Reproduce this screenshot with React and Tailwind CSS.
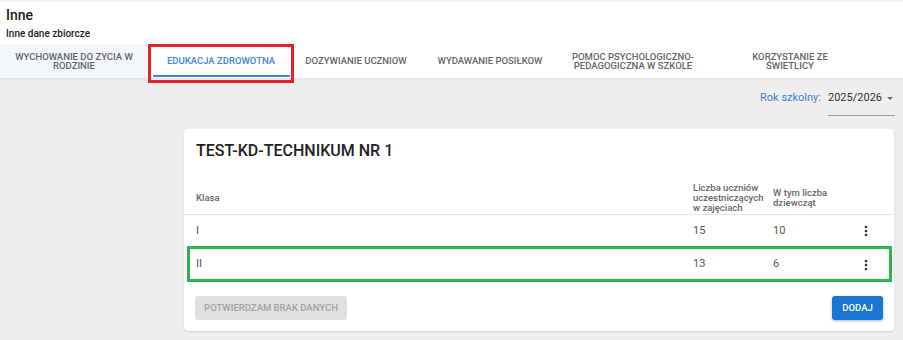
import React from 'react';

const tabs = [
    { label: <>WYCHOWANIE DO ZYCIA W<br />RODZINIE</>, w: 'w-[148px]', bg: 'bg-[#f4f7fa]' },
    { label: 'EDUKACJA ZDROWOTNA', w: 'w-[146px]', active: true },
    { label: 'DOZYWIANIE UCZNIOW', w: 'w-[124px]' },
    { label: 'WYDAWANIE POSIŁKOW', w: 'w-[144px]' },
    { label: <>POMOC PSYCHOLOGICZNO-<br />PEDAGOGICZNA W SZKOLE</>, w: 'w-[142px]' },
    { label: <>KORZYSTANIE ZE<br />ŚWIETLICY</>, w: 'w-[172px]' },
];

const rows = [
    { klasa: 'I', liczba: 15, dziewczat: 10 },
    { klasa: 'II', liczba: 13, dziewczat: 6 },
];

// ikona "more_vert"
const MoreVert = () => (
    <svg width="16" height="16" viewBox="0 0 24 24" fill="#333">
        <path d="M12 8c1.1 0 2-.9 2-2s-.9-2-2-2-2 .9-2 2 .9 2 2 2zm0 2c-1.1 0-2 .9-2 2s.9 2 2 2 2-.9 2-2-.9-2-2-2zm0 6c-1.1 0-2 .9-2 2s.9 2 2 2 2-.9 2-2-.9-2-2-2z" />
    </svg>
);

const App = () => {
    return (
        <div className="relative w-[903px] h-[340px] overflow-hidden bg-[#eeeeee] font-['Roboto',sans-serif] flex flex-col">
            {/* Nagłówek */}
            <div className="h-[44px] bg-white bg-gradient-to-b from-[#efefef] via-white to-white bg-[length:100%_6px] bg-no-repeat px-[6px] pt-[7px]">
                <div className="text-[14px] leading-[16px] font-medium text-[#222]">Inne</div>
                <div className="text-[10px] leading-[14px] font-medium text-[#222] mt-[4px]">Inne dane zbiorcze</div>
            </div>

            {/* Zakładki */}
            <div className="h-[34px] bg-white flex shadow-[0_1px_2px_rgba(0,0,0,0.08)] relative z-10">
                {tabs.map((t, i) => (
                    <div key={i} className={`${t.w} ${t.bg || ''} relative flex items-center justify-center text-center px-2`}>
                        <span className={`text-[9.5px] leading-[9.5px] font-medium ${t.active ? 'text-[#3d86d8]' : 'text-[#666]'}`}>
                            {t.label}
                        </span>
                        {t.active && <div className="absolute left-[5px] right-[4px] bottom-[1px] h-[2px] bg-[#3d86d8]" />}
                    </div>
                ))}
            </div>

            {/* Rok szkolny */}
            <div className="flex justify-end pr-[8px] pt-[9px]">
                <div className="pt-[4px] text-[11px] leading-[14px] text-[#3d7fcf] mr-[7px]">Rok szkolny:</div>
                <div className="w-[67px] h-[29px] border-b border-[#9a9a9a] pt-[4px] flex justify-between">
                    <span className="text-[11px] leading-[14px] text-[#333]">2025/2026</span>
                    <svg width="8" height="14" viewBox="0 0 8 14" className="mr-[1px]">
                        <path d="M1 6 L7 6 L4 9 Z" fill="#666" />
                    </svg>
                </div>
            </div>

            {/* Karta szkoły */}
            <div className="ml-[184px] mr-[9px] mt-[13px] bg-white rounded-[4px] shadow-[0_1px_2px_rgba(0,0,0,0.12)] pt-[12px] pb-[11px]">
                <h2 className="px-[12px] text-[16px] leading-[20px] font-medium text-[#222]">TEST-KD-TECHNIKUM NR 1</h2>

                <div className="mt-[20px] grid grid-cols-[497px_80px_1fr_26px] pl-[12px] pr-[15px] h-[34px] items-center border-b border-[#e6e6e6] text-[9.5px] leading-[10px] font-medium text-[#666]">
                    <div>Klasa</div>
                    <div>Liczba uczniów<br />uczestniczących<br />w zajęciach</div>
                    <div>W tym liczba<br />dziewcząt</div>
                    <div />
                </div>

                {rows.map((r, i) => (
                    <div key={r.klasa} className={`grid grid-cols-[497px_80px_1fr_26px] pl-[12px] pr-[15px] h-[33px] items-center text-[11px] text-[#555] ${i === 0 ? 'border-b border-[#e6e6e6]' : ''}`}>
                        <div>{r.klasa}</div>
                        <div>{r.liczba}</div>
                        <div>{r.dziewczat}</div>
                        <div className="flex justify-center"><MoreVert /></div>
                    </div>
                ))}

                <div className="mt-[15px] px-[11px] flex justify-between">
                    <button className="h-[24px] w-[152px] rounded-[3px] bg-[#e0e0e0] text-[9.5px] font-medium text-[#a3a3a3]">
                        POTWIERDZAM BRAK DANYCH
                    </button>
                    <button className="h-[24px] w-[51px] rounded-[3px] bg-[#1976d2] text-[9.5px] font-medium text-white shadow-[0_1px_3px_rgba(0,0,0,0.3)]">
                        DODAJ
                    </button>
                </div>
            </div>

            {/* Adnotacje */}
            <div className="absolute z-20 left-[148px] top-[44px] w-[146px] h-[39px] border-[3px] border-[#e8202a]" />
            <div className="absolute z-20 left-[187px] top-[246px] w-[705px] h-[36px] border-[3px] border-[#2fb34c]" />
        </div>
    );
};

export default App;
